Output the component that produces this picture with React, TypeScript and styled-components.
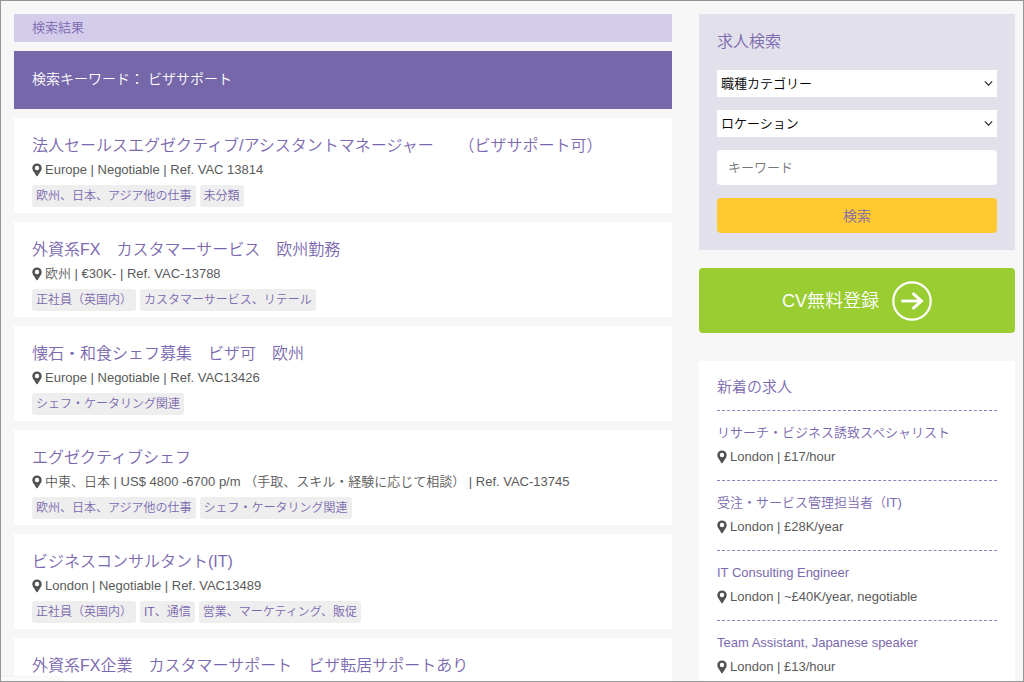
import React from 'react';
import styled, { createGlobalStyle, css } from 'styled-components';

const color = {
  page: '#f7f7f7',
  purple: '#7666aa',
  link: '#7b69af',
  lilac: '#d3cceb',
  panel: '#e2e0ea',
  text: '#5a5a5a',
  pin: '#505252',
  tag: '#eeeeee',
  yellow: '#ffca30',
  green: '#9acd32',
};

const GlobalStyle = createGlobalStyle`
  *, *::before, *::after { box-sizing: border-box; }
  html { scrollbar-width: none; }
  body {
    margin: 0;
    background: ${color.page};
    color: ${color.text};
    font-family: "Liberation Sans", "Noto Sans CJK JP", sans-serif;
    font-size: 13px;
    font-weight: 350;
    line-height: 20px;
  }
  h1, h2, h3, p, ul { margin: 0; padding: 0; font-weight: inherit; }
  ul { list-style: none; }
  a { color: ${color.link}; text-decoration: none; }
  button, input, select { font: inherit; }
`;

const WindowFrame = styled.div`
  position: fixed;
  inset: 0;
  border: 1px solid #959595;
  pointer-events: none;
`;

const StatusBubble = styled.div`
  position: fixed;
  left: 1px;
  bottom: 1px;
  width: 60px;
  height: 4px;
  border-top-right-radius: 4px;
  background: #fbfbfb;
  box-shadow: 0 0 2px rgba(0, 0, 0, 0.12);
`;

const Page = styled.div`
  display: grid;
  grid-template-columns: minmax(0, 1fr) 316px;
  align-items: start;
  column-gap: 27px;
  padding: 14px 9px 14px 14px;
`;

const Results = styled.main`
  display: flex;
  flex-direction: column;
  gap: 9px;
`;

const Breadcrumb = styled.nav`
  padding: 4px 18px;
  background: ${color.lilac};
  color: ${color.link};
`;

const KeywordBanner = styled.h1`
  padding: 16px 18px 18px;
  background: ${color.purple};
  color: #fff;
  font-size: 14px;
  line-height: 24px;
`;

const JobCard = styled.article`
  min-height: 95px;
  padding: 16px 18px 6px;
  background: #fff;
`;

const JobTitle = styled.h2`
  font-size: 16px;
  line-height: 24px;
`;

const Meta = styled.p<{ $tall?: boolean }>`
  display: flex;
  align-items: center;
  gap: 3px;
  line-height: ${(p) => (p.$tall ? 24 : 20)}px;

  svg {
    flex: none;
  }
`;

const Tags = styled.ul`
  display: flex;
  flex-wrap: wrap;
  gap: 4px;
  margin-top: 3px;
`;

const Tag = styled.a`
  display: block;
  padding: 0 4px;
  border-radius: 3px;
  background: ${color.tag};
  font-size: 12px;
  line-height: 22px;
`;

const Sidebar = styled.aside`
  display: flex;
  flex-direction: column;
`;

const SearchForm = styled.form`
  display: flex;
  flex-direction: column;
  gap: 13px;
  padding: 16px 18px 17px;
  background: ${color.panel};
`;

const SearchHeading = styled.h2`
  margin-bottom: 3px;
  color: ${color.link};
  font-size: 16px;
  line-height: 24px;
`;

const SelectBox = styled.label`
  position: relative;
  display: block;

  svg {
    position: absolute;
    top: 10px;
    right: 4px;
    pointer-events: none;
  }
`;

const Select = styled.select`
  display: block;
  width: 100%;
  height: 27px;
  padding: 0 20px 0 4px;
  border: 0;
  border-radius: 0;
  background: #fff;
  color: #000;
  appearance: none;
`;

const control = css`
  width: 100%;
  height: 35px;
  border: 0;
  border-radius: 4px;
`;

const KeywordInput = styled.input`
  ${control}
  padding: 0 11px;
  background: #fff;

  &::placeholder { color: #757575; opacity: 1; }
`;

const SubmitButton = styled.button`
  ${control}
  background: ${color.yellow};
  color: ${color.link};
  font-size: 14px;
`;

const RegisterLink = styled.a`
  display: flex;
  align-items: center;
  justify-content: center;
  gap: 13px;
  height: 65px;
  margin: 18px 0 28px;
  border-radius: 4px;
  background: ${color.green};
  color: #fff;
  font-size: 18px;
`;

const Latest = styled.section`
  padding: 14px 18px 0;
  background: #fff;
`;

const LatestHeading = styled.h2`
  margin-bottom: 11px;
  color: ${color.link};
  font-size: 15px;
  line-height: 24px;
`;

const LatestItem = styled.li`
  display: flex;
  flex-direction: column;
  gap: 4px;
  padding: 12px 0 13px;
  border-top: 1px dashed #8f83bd;
`;

type Job = { title: string; meta?: string; tags?: string[] };

const jobs: Job[] = [
  {
    title: '法人セールスエグゼクティブ/アシスタントマネージャー 　 （ビザサポート可）',
    meta: 'Europe | Negotiable | Ref. VAC 13814',
    tags: ['欧州、日本、アジア他の仕事', '未分類'],
  },
  {
    title: '外資系FX　カスタマーサービス　欧州勤務',
    meta: '欧州 | €30K- | Ref. VAC-13788',
    tags: ['正社員（英国内）', 'カスタマーサービス、リテール'],
  },
  {
    title: '懐石・和食シェフ募集　ビザ可　欧州',
    meta: 'Europe | Negotiable | Ref. VAC13426',
    tags: ['シェフ・ケータリング関連'],
  },
  {
    title: 'エグゼクティブシェフ',
    meta: '中東、日本 | US$ 4800 -6700 p/m （手取、スキル・経験に応じて相談） | Ref. VAC-13745',
    tags: ['欧州、日本、アジア他の仕事', 'シェフ・ケータリング関連'],
  },
  {
    title: 'ビジネスコンサルタント(IT)',
    meta: 'London | Negotiable | Ref. VAC13489',
    tags: ['正社員（英国内）', 'IT、通信', '営業、マーケティング、販促'],
  },
  { title: '外資系FX企業　カスタマーサポート　ビザ転居サポートあり' },
];

const latest = [
  { title: 'リサーチ・ビジネス誘致スペシャリスト', meta: 'London | £17/hour' },
  { title: '受注・サービス管理担当者（IT)', meta: 'London | £28K/year' },
  { title: 'IT Consulting Engineer', meta: 'London | ~£40K/year, negotiable' },
  { title: 'Team Assistant, Japanese speaker', meta: 'London | £13/hour' },
];

const Pin = () => (
  <svg width="10" height="14" viewBox="0 0 10 14" fill={color.pin} aria-hidden="true">
    <path
      fillRule="evenodd"
      d="M5 0.4A4.7 4.7 0 0 0 0.3 5.1C0.3 7 1.2 8.1 2.2 9.6L4.4 13Q5 13.7 5.6 13L7.8 9.6C8.8 8.1 9.7 7 9.7 5.1A4.7 4.7 0 0 0 5 0.4ZM5 2.8A2.2 2.2 0 1 1 5 7.2A2.2 2.2 0 1 1 5 2.8Z"
    />
  </svg>
);

const Chevron = () => (
  <svg width="9" height="7" viewBox="0 0 9 7" fill="none" stroke="#222" strokeWidth="1.1" aria-hidden="true">
    <path d="M0.8 1.4 4.5 5.1 8.2 1.4" />
  </svg>
);

const ArrowCircle = () => (
  <svg width="40" height="40" viewBox="0 0 40 40" fill="none" stroke="#fff" aria-hidden="true">
    <circle cx="20" cy="20" r="18.7" strokeWidth="2.2" />
    <path d="M9.3 20H29" strokeWidth="2.8" />
    <path d="M20.6 12.2 29.4 20 20.6 27.8" strokeWidth="3" />
  </svg>
);

const Dropdown = ({ label }: { label: string }) => (
  <SelectBox>
    <Select aria-label={label} defaultValue="">
      <option value="">{label}</option>
    </Select>
    <Chevron />
  </SelectBox>
);

export default function App() {
  return (
    <>
      <GlobalStyle />
      <Page>
        <Results>
          <Breadcrumb>検索結果</Breadcrumb>
          <KeywordBanner>検索キーワード： ビザサポート</KeywordBanner>
          {jobs.map((job) => (
            <JobCard key={job.title}>
              <JobTitle>
                <a href="#job">{job.title}</a>
              </JobTitle>
              {job.meta && (
                <Meta $tall>
                  <Pin />
                  <span>{job.meta}</span>
                </Meta>
              )}
              {job.tags && (
                <Tags>
                  {job.tags.map((tag) => (
                    <li key={tag}>
                      <Tag href="#tag">{tag}</Tag>
                    </li>
                  ))}
                </Tags>
              )}
            </JobCard>
          ))}
        </Results>

        <Sidebar>
          <SearchForm onSubmit={(e) => e.preventDefault()}>
            <SearchHeading>求人検索</SearchHeading>
            <Dropdown label="職種カテゴリー" />
            <Dropdown label="ロケーション" />
            <KeywordInput type="text" placeholder="キーワード" aria-label="キーワード" />
            <SubmitButton type="submit">検索</SubmitButton>
          </SearchForm>

          <RegisterLink href="#register">
            <span>CV無料登録</span>
            <ArrowCircle />
          </RegisterLink>

          <Latest>
            <LatestHeading>新着の求人</LatestHeading>
            <ul>
              {latest.map((item) => (
                <LatestItem key={item.title}>
                  <a href="#job">{item.title}</a>
                  <Meta>
                    <Pin />
                    <span>{item.meta}</span>
                  </Meta>
                </LatestItem>
              ))}
            </ul>
          </Latest>
        </Sidebar>
      </Page>
      <StatusBubble />
      <WindowFrame />
    </>
  );
}
